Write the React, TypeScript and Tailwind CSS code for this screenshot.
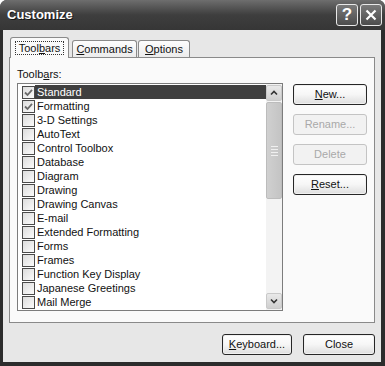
import React from "react";

const items: [string, boolean][] = [
  ["Standard", true],
  ["Formatting", true],
  ["3-D Settings", false],
  ["AutoText", false],
  ["Control Toolbox", false],
  ["Database", false],
  ["Diagram", false],
  ["Drawing", false],
  ["Drawing Canvas", false],
  ["E-mail", false],
  ["Extended Formatting", false],
  ["Forms", false],
  ["Frames", false],
  ["Function Key Display", false],
  ["Japanese Greetings", false],
  ["Mail Merge", false],
];

function Check({ on }: { on: boolean }) {
  return (
    <div className="w-[13px] h-[13px] shrink-0 border border-[#4a4a4a] bg-linear-to-br from-[#dcdcdc] to-[#fbfbfb] flex items-center justify-center">
      {on && (
        <svg width="9" height="9" viewBox="0 0 9 9">
          <path d="M1 4.5 L3.5 7 L8 1.8" stroke="#6a6a6a" strokeWidth="1.8" fill="none" />
        </svg>
      )}
    </div>
  );
}

function Btn({
  children,
  w,
  disabled,
}: {
  children: React.ReactNode;
  w: string;
  disabled?: boolean;
}) {
  return (
    <div
      className={
        "h-[21px] rounded-[3px] border flex items-center justify-center text-[11px] " +
        w +
        (disabled
          ? " border-[#c4c4c4] bg-[#f2f2f2] text-[#a9a9a9]"
          : " border-[#262626] bg-linear-to-b from-[#ffffff] via-[#f6f6f6] to-[#dedede] text-[#111] shadow-[inset_0_0_0_1px_#f0f0f0]")
      }
    >
      {children}
    </div>
  );
}

export default function App() {
  return (
    <div
      className="w-[385px] h-[366px] bg-[#2c2c2c] rounded-t-[7px] flex flex-col overflow-hidden"
      style={{ fontFamily: '"Liberation Sans", Arial, sans-serif' }}
    >
      {/* title bar */}
      <div className="h-[30px] shrink-0 flex items-center justify-between pl-[7px] pr-[3px] bg-linear-to-b from-[#6e6e6e] via-[#3e3e3e] to-[#363636]">
        <span className="text-white font-bold text-[13px] [text-shadow:1px_1px_0_#161616]">
          Customize
        </span>
        <div className="flex gap-[2px] -mt-[1px]">
          <div className="w-[22px] h-[22px] rounded-[3px] border border-[#e8e8e8] bg-linear-to-b from-[#7a7a7a] to-[#4c4c4c] flex items-center justify-center text-white font-bold text-[17px] leading-none">
            ?
          </div>
          <div className="w-[22px] h-[22px] rounded-[3px] border border-[#e8e8e8] bg-linear-to-b from-[#7a7a7a] to-[#4c4c4c] flex items-center justify-center">
            <svg width="12" height="12" viewBox="0 0 12 12">
              <path d="M1.5 1.5 L10.5 10.5 M10.5 1.5 L1.5 10.5" stroke="white" strokeWidth="2.2" />
            </svg>
          </div>
        </div>
      </div>

      {/* body */}
      <div className="flex-1 ml-[3px] mr-[4px] mb-[4px] bg-[#e7e7e7] flex flex-col">
        {/* tabs */}
        <div className="flex items-end h-[20px] mt-[7px] pl-[7px] text-[11px] text-[#111]">
          <div className="relative z-10 w-[59px] h-[21px] -mb-px bg-[#fafafa] border border-b-0 border-[#8a8a8a] rounded-t-[3px] flex items-start justify-center pt-[3px]">
            <span className="border border-dotted border-[#333] px-[3px] leading-[12px] h-[14px]">
              Tool<span className="underline">b</span>ars
            </span>
          </div>
          <div className="w-[65px] h-[17px] ml-[3px] bg-linear-to-b from-[#fdfdfd] to-[#ececec] border border-b-0 border-[#8a8a8a] rounded-t-[3px] flex items-center justify-center">
            <span>
              <span className="underline">C</span>ommands
            </span>
          </div>
          <div className="w-[52px] h-[17px] ml-px bg-linear-to-b from-[#fdfdfd] to-[#ececec] border border-b-0 border-[#8a8a8a] rounded-t-[3px] flex items-center justify-center">
            <span>
              <span className="underline">O</span>ptions
            </span>
          </div>
        </div>

        {/* panel */}
        <div className="ml-[6px] w-[366px] h-[266px] border border-[#8a8a8a] bg-[#fafafa] pl-[7px] pt-[9px] flex flex-col text-[11px] text-[#111]">
          <div className="h-[14px] leading-[14px]">
            Toolb<span className="underline">a</span>rs:
          </div>
          <div className="flex mt-[2px]">
            {/* list */}
            <div className="w-[266px] h-[228px] border border-[#7c7c7c] bg-white flex">
              <div className="flex-1 pt-px flex flex-col">
                {items.map(([name, on], i) => (
                  <div key={name} className="h-[14px] flex items-center">
                    <div className="ml-[4px]">
                      <Check on={on} />
                    </div>
                    <div
                      className={
                        "flex-1 h-[14px] leading-[14px] pl-[2px] " +
                        (i === 0 ? "bg-[#3f3f3f] text-white" : "")
                      }
                    >
                      {name}
                    </div>
                  </div>
                ))}
              </div>
              {/* scrollbar */}
              <div className="w-[16px] bg-[#f3f3f3] flex flex-col py-px">
                <div className="h-[16px] rounded-[2px] border border-[#c9c9c9] bg-linear-to-b from-[#e9e9e9] to-[#cfcfcf] flex items-center justify-center">
                  <svg width="8" height="6" viewBox="0 0 8 6">
                    <path d="M1 4.5 L4 1.5 L7 4.5" stroke="#333" strokeWidth="1.6" fill="none" />
                  </svg>
                </div>
                <div className="h-[97px] mt-px rounded-[2px] border border-[#bcbcbc] bg-linear-to-r from-[#d0d0d0] to-[#c4c4c4] flex flex-col items-center justify-center gap-[2px]">
                  <div className="w-[7px] h-px bg-[#f0f0f0]" />
                  <div className="w-[7px] h-px bg-[#f0f0f0]" />
                  <div className="w-[7px] h-px bg-[#f0f0f0]" />
                  <div className="w-[7px] h-px bg-[#f0f0f0]" />
                </div>
                <div className="flex-1" />
                <div className="h-[16px] rounded-[2px] border border-[#c9c9c9] bg-linear-to-b from-[#e9e9e9] to-[#cfcfcf] flex items-center justify-center">
                  <svg width="8" height="6" viewBox="0 0 8 6">
                    <path d="M1 1.5 L4 4.5 L7 1.5" stroke="#333" strokeWidth="1.6" fill="none" />
                  </svg>
                </div>
              </div>
            </div>

            {/* right buttons */}
            <div className="ml-[10px] mt-px flex flex-col gap-[9px]">
              <Btn w="w-[74px]">
                <span>
                  <span className="underline">N</span>ew...
                </span>
              </Btn>
              <Btn w="w-[74px]" disabled>
                Rename...
              </Btn>
              <Btn w="w-[74px]" disabled>
                Delete
              </Btn>
              <Btn w="w-[74px]">
                <span>
                  <span className="underline">R</span>eset...
                </span>
              </Btn>
            </div>
          </div>
        </div>

        {/* bottom buttons */}
        <div className="flex justify-end gap-[11px] mt-[11px] mr-[6px]">
          <Btn w="w-[70px]">
            <span>
              <span className="underline">K</span>eyboard...
            </span>
          </Btn>
          <Btn w="w-[72px]">Close</Btn>
        </div>
      </div>
    </div>
  );
}
